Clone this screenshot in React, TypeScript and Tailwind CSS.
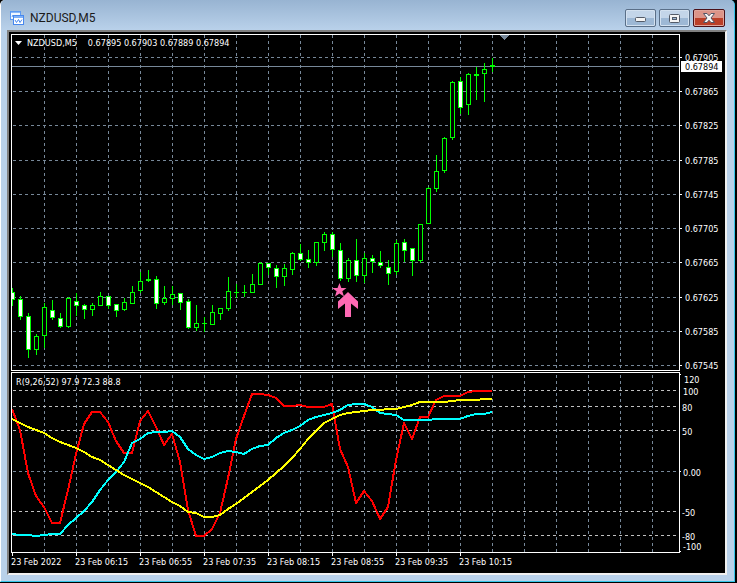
import React from "react";

type Candle = [high: number, top: number, bottom: number, low: number, filled: number];

const STEP = 8;
const FONT = "font-['DejaVu_Sans_Condensed','DejaVu_Sans',sans-serif] text-[9px]";

// Pane coordinates: high, body top, body bottom, low, 1 = bearish (filled)
const PRICE_TOP = 35;
const candles: Candle[] = [
  [288, 292, 299, 305, 1],
  [296, 299, 316, 319, 1],
  [313, 316, 349, 357, 1],
  [334, 336, 349, 354, 0],
  [303, 307, 335, 347, 0],
  [300, 310, 317, 319, 1],
  [313, 318, 326, 327, 1],
  [297, 298, 326, 327, 0],
  [293, 301, 305, 315, 1],
  [304, 305, 309, 318, 1],
  [303, 305, 309, 315, 0],
  [292, 296, 305, 305, 0],
  [296, 296, 305, 308, 1],
  [304, 304, 310, 316, 1],
  [298, 302, 309, 310, 0],
  [286, 292, 303, 303, 0],
  [272, 281, 290, 292, 0],
  [270, 279, 280, 281, 1],
  [276, 279, 303, 308, 1],
  [286, 298, 302, 304, 0],
  [286, 294, 298, 304, 0],
  [293, 293, 302, 309, 1],
  [299, 301, 327, 328, 1],
  [305, 323, 327, 330, 0],
  [317, 323, 323, 331, 0],
  [305, 312, 324, 324, 0],
  [308, 308, 313, 319, 0],
  [277, 291, 308, 310, 0],
  [284, 292, 292, 297, 0],
  [285, 292, 292, 296, 0],
  [274, 284, 292, 292, 0],
  [262, 263, 284, 284, 0],
  [263, 263, 267, 274, 1],
  [265, 268, 276, 287, 1],
  [264, 268, 276, 285, 0],
  [252, 253, 269, 274, 0],
  [244, 253, 259, 260, 1],
  [250, 259, 262, 267, 1],
  [242, 242, 262, 265, 0],
  [232, 234, 242, 250, 0],
  [232, 234, 249, 256, 1],
  [243, 250, 278, 280, 1],
  [258, 260, 278, 281, 0],
  [239, 260, 275, 281, 1],
  [253, 258, 275, 282, 0],
  [255, 258, 261, 272, 1],
  [251, 262, 265, 267, 1],
  [260, 267, 273, 284, 1],
  [240, 243, 271, 274, 0],
  [239, 242, 250, 261, 1],
  [248, 248, 260, 275, 1],
  [224, 224, 260, 262, 0],
  [187, 188, 223, 223, 0],
  [155, 171, 188, 191, 0],
  [137, 138, 170, 172, 0],
  [81, 82, 137, 139, 0],
  [77, 81, 107, 113, 1],
  [73, 74, 104, 114, 0],
  [67, 74, 75, 99, 0],
  [63, 69, 73, 101, 0],
  [58, 65, 66, 71, 0],
];

const priceScale = [
  { y: 57, label: "0.67905" },
  { y: 91, label: "0.67865" },
  { y: 125, label: "0.67825" },
  { y: 160, label: "0.67785" },
  { y: 194, label: "0.67745" },
  { y: 228, label: "0.67705" },
  { y: 262, label: "0.67665" },
  { y: 297, label: "0.67625" },
  { y: 331, label: "0.67585" },
  { y: 365, label: "0.67545" },
];
const CURRENT_Y = 66;

const INDICATOR_TOP = 373;
const levels = [390, 406, 430, 511, 535];
const indicatorScale = [
  { y: 379, label: "120", x: 4 },
  { y: 391, label: "100", x: 3 },
  { y: 407, label: "80", x: 2 },
  { y: 431, label: "50", x: 2 },
  { y: 472, label: "0.00", x: 3 },
  { y: 512, label: "-50", x: 2 },
  { y: 536, label: "-80", x: 2 },
  { y: 546, label: "-100", x: 3 },
];

const red = [
  409, 430, 473, 496, 507, 523, 523, 490, 454, 424, 412, 412, 422, 441, 453,
  453, 421, 411, 427, 445, 434, 462, 510, 536, 536, 529, 513, 478, 439, 416,
  394, 394, 395, 398, 406, 406, 405, 407, 407, 407, 404, 449, 467, 503, 491,
  501, 519, 507, 460, 423, 439, 417, 417, 400, 396, 396, 396, 392, 391, 391,
  391,
];
const cyan = [
  534, 535, 535, 536, 535, 534, 534, 525, 518, 511, 502, 490, 480, 472, 462,
  443, 439, 433, 432, 432, 431, 437, 449, 455, 459, 457, 453, 451, 452, 454,
  449, 446, 445, 438, 433, 430, 426, 420, 417, 415, 413, 410, 405, 404, 404,
  407, 413, 414, 415, 420, 420, 420, 420, 419, 419, 419, 419, 416, 414, 414,
  412,
];
const yellow = [
  419, 423, 427, 430, 433, 438, 442, 445, 448, 452, 457, 460, 465, 470, 475,
  479, 483, 487, 492, 497, 502, 506, 512, 513, 517, 517, 515, 509, 504, 498,
  492, 486, 480, 473, 466, 458, 449, 439, 431, 423, 419, 415, 413, 412, 411,
  410, 410, 409, 409, 407, 405, 402, 402, 402, 402, 401, 400, 400, 400, 399,
  399,
];

const times = [
  "23 Feb 2022",
  "23 Feb 06:15",
  "23 Feb 06:55",
  "23 Feb 07:35",
  "23 Feb 08:15",
  "23 Feb 08:55",
  "23 Feb 09:35",
  "23 Feb 10:15",
];

const toPoints = (values: number[]) =>
  values.map((v, i) => `${i * STEP},${v - INDICATOR_TOP}`).join(" ");

const VerticalGrid: React.FC<{ offset: number }> = ({ offset }) => (
  <g stroke="#778899" strokeDasharray="3 3" strokeDashoffset={offset}>
    {Array.from({ length: 60 }, (_, i) => 32.5 + i * 32).map((x) => (
      <line key={x} x1={x} x2={x} y1="0" y2="100%" />
    ))}
  </g>
);

const PricePane: React.FC = () => (
  <svg
    className="block h-[335px] w-full"
    shapeRendering="crispEdges"
    role="img"
    aria-label="NZDUSD five minute candles"
  >
    <VerticalGrid offset={0} />
    <g stroke="#778899">
      {priceScale.map(({ y }) => (
        <line
          key={y}
          x1="0"
          x2="100%"
          y1={y - PRICE_TOP + 0.5}
          y2={y - PRICE_TOP + 0.5}
          strokeDasharray="3 3"
          strokeDashoffset="5"
        />
      ))}
      <line
        x1="0"
        x2="100%"
        y1={CURRENT_Y - PRICE_TOP + 0.5}
        y2={CURRENT_Y - PRICE_TOP + 0.5}
      />
    </g>
    <path d="M487 0h10l-5 5z" fill="#778899" />
    {candles.map(([high, top, bottom, low, filled], i) => {
      const x = i * STEP;
      const height = bottom - top + 1;
      return (
        <g key={i} fill="#00ff00">
          <rect x={x} y={high - PRICE_TOP} width="1" height={low - high + 1} />
          <rect x={x - 2} y={top - PRICE_TOP} width="5" height={height} />
          {height > 2 && (
            <rect
              x={x - 1}
              y={top - PRICE_TOP + 1}
              width="3"
              height={height - 2}
              fill={filled ? "#ffffff" : "#000000"}
            />
          )}
        </g>
      );
    })}
    <g fill="#ff69b4" shapeRendering="auto">
      <path d="M327.500 248l1.800 5h5.200l-4.200 3.300 1.700 5.200-4.500-3-4.500 3 1.600-5.200-4.600-3.300h5.500z" />
      <path d="M336 257l10 9.500v7.500l-7-5.500v13.500h-6v-13.500l-7 5.500v-7.500z" />
    </g>
  </svg>
);

const IndicatorPane: React.FC = () => (
  <svg
    className="block h-[179px] w-full"
    shapeRendering="crispEdges"
    role="img"
    aria-label="R(9,26,52) indicator"
  >
    <VerticalGrid offset={4} />
    <g strokeDasharray="3 3" strokeDashoffset="5">
      {levels.map((y) => (
        <line
          key={y}
          x1="0"
          x2="100%"
          y1={y - INDICATOR_TOP + 0.5}
          y2={y - INDICATOR_TOP + 0.5}
          stroke="#c0c0c0"
        />
      ))}
      <line x1="0" x2="100%" y1="98.5" y2="98.5" stroke="#778899" />
    </g>
    <g fill="none" strokeWidth="2" strokeLinejoin="round">
      <polyline points={toPoints(red)} stroke="#ff0000" />
      <polyline points={toPoints(cyan)} stroke="#00ffff" />
      <polyline points={toPoints(yellow)} stroke="#ffff00" />
    </g>
  </svg>
);

const PriceAxis: React.FC = () => (
  <svg className={`block h-[337px] w-full ${FONT}`} fill="#ffffff">
    {priceScale.map(({ y, label }) => (
      <g key={label}>
        <rect x="0" y={y - PRICE_TOP + 1} width="2" height="1" />
        <text x="5" y={y - PRICE_TOP + 5}>
          {label}
        </text>
      </g>
    ))}
    <rect x="1" y={CURRENT_Y - PRICE_TOP - 4} width="41" height="11" />
    <text x="5" y={CURRENT_Y - PRICE_TOP + 5} fill="#000000">
      0.67894
    </text>
  </svg>
);

const IndicatorAxis: React.FC = () => (
  <svg className={`block h-[181px] w-full ${FONT}`} fill="#ffffff">
    {[374, 471, 551].map((y) => (
      <rect key={y} x="0" y={y - INDICATOR_TOP + 1} width="1" height="1" />
    ))}
    {indicatorScale.map(({ y, label, x }) => (
      <text key={label} x={x} y={y - INDICATOR_TOP + 5}>
        {label}
      </text>
    ))}
  </svg>
);

const ChartIcon: React.FC = () => (
  <svg width="14" height="14" viewBox="0 0 14 14" fill="none" aria-hidden="true">
    <rect x="0.5" y="0.5" width="10" height="8" fill="#f2f8ff" stroke="#5c9af2" />
    <path d="M1 1.500h9" stroke="#8ab8f8" />
    <path d="M2 6l1-2 1 2 1-2" stroke="#5c9af2" />
    <rect x="3.5" y="4.5" width="10" height="9" fill="#ffffff" stroke="#4788ee" />
    <path d="M4 6h9" stroke="#7eb0f7" strokeWidth="2" />
    <path d="M5 9l1.500 2.500 2-3 1.500 3 2-3" stroke="#4788ee" />
  </svg>
);

const TitleBar: React.FC = () => (
  <header className="flex h-[30px] items-start justify-between bg-linear-to-b from-[#98b4d2] to-[#b9d1ea] pr-[9px] pl-[9px]">
    <div className="flex items-center gap-[6px] pt-[10px]">
      <ChartIcon />
      <h1 className="font-[Roboto,sans-serif] text-[12px] leading-[16px] text-[#1a1a1a]">
        NZDUSD,M5
      </h1>
    </div>
    <div className="flex gap-[3px] pt-[9px]">
      <button
        type="button"
        aria-label="Minimize"
        className="flex h-[18px] w-[31px] items-center justify-center rounded-[2px] border border-[#5a6f88] bg-linear-to-b from-[#c3d5e9] from-50% to-[#9db8d5] to-50% inset-ring inset-ring-[#d3e1f0]"
      >
        <svg width="11" height="5" className="mt-[3px]" aria-hidden="true">
          <rect x="0.5" y="0.5" width="10" height="4" rx="1" fill="#f4f4f4" stroke="#535b68" />
        </svg>
      </button>
      <button
        type="button"
        aria-label="Maximize"
        className="flex h-[18px] w-[31px] items-center justify-center rounded-[2px] border border-[#5a6f88] bg-linear-to-b from-[#c3d5e9] from-50% to-[#9db8d5] to-50% inset-ring inset-ring-[#d3e1f0]"
      >
        <svg width="11" height="9" aria-hidden="true">
          <rect x="0.5" y="0.5" width="10" height="8" rx="1" fill="#f4f4f4" stroke="#535b68" />
          <rect x="3.5" y="3.5" width="4" height="2" fill="#9db8d5" stroke="#535b68" />
        </svg>
      </button>
      <button
        type="button"
        aria-label="Close"
        className="flex h-[18px] w-[32px] items-center justify-center rounded-[2px] border border-[#4a1018] bg-linear-to-b from-[#dc9488] from-50% to-[#bb3f28] to-50% inset-ring inset-ring-[#e0a59b]"
      >
        <svg width="12" height="10" aria-hidden="true">
          <path
            d="M0.500 0.500h3.500l2 2.300 2-2.300h3.500l-3.500 4.500 3.500 4.500h-3.500l-2-2.300-2 2.300h-3.500l3.500-4.500z"
            fill="#f6f6f6"
            stroke="#535566"
          />
        </svg>
      </button>
    </div>
  </header>
);

const App: React.FC = () => {
  return (
    <main className="bg-black pr-[2px] pb-px">
      <div className="overflow-hidden rounded-t-[5px] border-r border-b border-l border-r-[#35c5e8] border-b-[#35c5e8] border-l-white bg-[#b9d1ea]">
        <TitleBar />
        <section className="mr-[7px] mb-[6px] ml-[6px] border-t-2 border-r-2 border-b-2 border-l-2 border-t-[#808080] border-r-[#f0f0f0] border-b-[#f0f0f0] border-l-[#808080] bg-black pt-[2px] pl-[2px] text-white">
          <div className="grid grid-cols-[minmax(0,1fr)_45px] gap-y-px">
            <div className="relative border border-white">
              <PricePane />
              <p
                className={`absolute top-[2px] left-[3px] flex items-center gap-[5px] leading-[12px] ${FONT}`}
              >
                <svg width="7" height="4" aria-hidden="true">
                  <path d="M0 0h7l-3.500 4z" fill="#ffffff" />
                </svg>
                <span className="mr-[6px]">NZDUSD,M5</span>
                <span>0.67895 0.67903 0.67889 0.67894</span>
              </p>
            </div>
            <PriceAxis />
            <div className="relative border border-white">
              <IndicatorPane />
              <p className={`absolute top-[3px] left-[4px] leading-[12px] ${FONT}`}>
                R(9,26,52) 97.9 72.3 88.8
              </p>
            </div>
            <IndicatorAxis />
          </div>
          <div className={`flex h-[20px] overflow-hidden ${FONT}`}>
            {times.map((time) => (
              <div key={time} className="w-16 shrink-0">
                <div className="ml-px h-[3px] w-px bg-white" />
                <time className="block leading-[12px] whitespace-nowrap">{time}</time>
              </div>
            ))}
          </div>
        </section>
      </div>
    </main>
  );
};

export default App;
